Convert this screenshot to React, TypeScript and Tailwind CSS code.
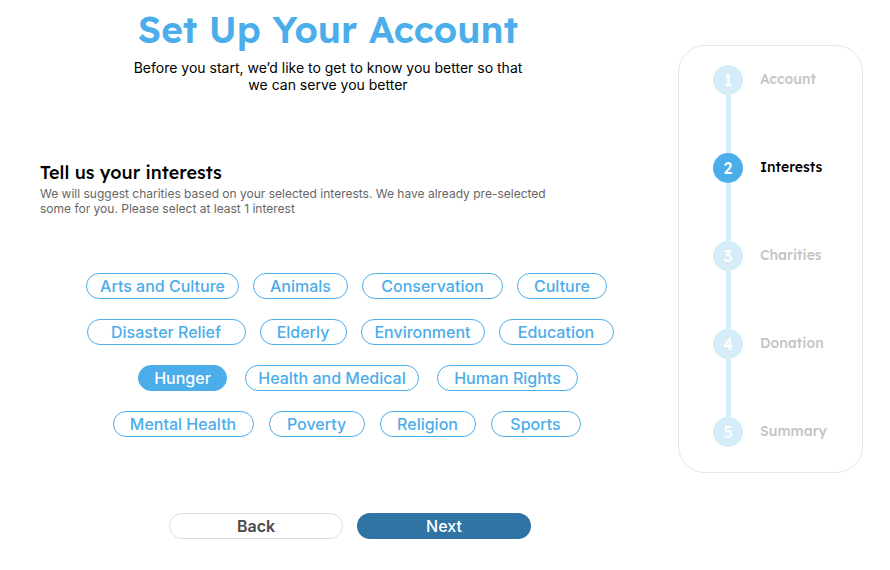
import { useState } from "react";
import { clsx } from "clsx";

const rows = [
  {
    layout: "gap-[14px] pl-[37px]",
    items: [
      { name: "Arts and Culture", width: "w-[153px]" },
      { name: "Animals", width: "w-[95px]" },
      { name: "Conservation", width: "w-[141px]" },
      { name: "Culture", width: "w-[90px]" },
    ],
  },
  {
    layout: "gap-[14px] pl-[44px]",
    items: [
      { name: "Disaster Relief", width: "w-[159px]" },
      { name: "Elderly", width: "w-[87px]" },
      { name: "Environment", width: "w-[124px]" },
      { name: "Education", width: "w-[115px]" },
    ],
  },
  {
    layout: "gap-[18px] pl-[60px]",
    items: [
      { name: "Hunger", width: "w-[89px]" },
      { name: "Health and Medical", width: "w-[174px]" },
      { name: "Human Rights", width: "w-[141px]" },
    ],
  },
  {
    layout: "gap-[15px] pl-[37px]",
    items: [
      { name: "Mental Health", width: "w-[141px]" },
      { name: "Poverty", width: "w-[96px]" },
      { name: "Religion", width: "w-[96px]" },
      { name: "Sports", width: "w-[90px]" },
    ],
  },
];

const steps = ["Account", "Interests", "Charities", "Donation", "Summary"];
const currentStep = 1;

function Interests() {
  const [selected, setSelected] = useState<string[]>(["Hunger"]);
  const toggle = (name: string) =>
    setSelected((old) => (old.includes(name) ? old.filter((n) => n !== name) : [...old, name]));

  return (
    <div className="flex flex-col gap-5">
      {rows.map((row) => (
        <div key={row.items[0].name} className={clsx("flex justify-center", row.layout)}>
          {row.items.map(({ name, width }) => {
            const on = selected.includes(name);
            return (
              <button
                key={name}
                type="button"
                aria-pressed={on}
                onClick={() => toggle(name)}
                className={clsx(
                  "flex h-[26px] shrink-0 items-center justify-center rounded-full border border-[#4badea] text-base leading-6 font-medium whitespace-nowrap",
                  width,
                  on ? "bg-[#4badea] text-white" : "bg-white text-[#4badea]",
                )}
              >
                {name}
              </button>
            );
          })}
        </div>
      ))}
    </div>
  );
}

function Progress() {
  return (
    <aside className="mt-[45px] w-[185px] shrink-0 rounded-[27px] border border-[#e6e6e6] pt-[19px] pb-[25px] pl-[34px]">
      <ol>
        {steps.map((step, i) => {
          const active = i === currentStep;
          const last = i === steps.length - 1;
          return (
            <li key={step} aria-current={active ? "step" : undefined} className="flex gap-[17px]">
              <div className="flex flex-col items-center">
                <span
                  className={clsx(
                    "flex size-[30px] items-center justify-center rounded-full text-base font-medium text-white",
                    active ? "bg-[#4badea]" : "bg-[#d5edf9]",
                  )}
                >
                  {i + 1}
                </span>
                {!last && <span className="h-[58px] w-[5px] bg-[#d5edf9]" />}
              </div>
              <span
                className={clsx(
                  "text-sm leading-7 font-medium",
                  active ? "text-black" : "text-[#c4c4c4]",
                )}
              >
                {step}
              </span>
            </li>
          );
        })}
      </ol>
    </aside>
  );
}

export default function App() {
  return (
    <main className="flex items-start gap-[22px] bg-white pr-[27px] font-['Lexend','Inter',sans-serif]">
      <div className="min-w-0 flex-1 font-['Inter',sans-serif]">
        <header className="pt-[5px] text-center">
          <h1 className="font-['Lexend','Inter',sans-serif] text-[37px] leading-[48px] font-semibold text-[#4badea]">
            Set Up Your Account
          </h1>
          <p className="mx-auto mt-[6px] max-w-[410px] text-sm leading-[17px] text-black">
            Before you start, we’d like to get to know you better so that we can serve you better
          </p>
        </header>

        <section className="mt-[68px]">
          <h2 className="pl-10 font-['Lexend','Inter',sans-serif] text-lg leading-6 font-medium text-black">
            Tell us your interests
          </h2>
          <p className="ml-10 max-w-[540px] pt-px text-[12px] leading-[15px] text-[#666666]">
            We will suggest charities based on your selected interests. We have already pre-selected
            some for you. Please select at least 1 interest
          </p>
          <div className="mt-[57px]">
            <Interests />
          </div>
        </section>

        <div className="mt-[76px] flex justify-center gap-[14px] pl-11">
          <button
            type="button"
            className="h-[26px] w-[174px] rounded-full border border-[#dddddd] bg-white text-base leading-6 font-semibold text-[#4a4a4a]"
          >
            Back
          </button>
          <button
            type="button"
            className="h-[26px] w-[174px] rounded-full bg-[#2f74a3] text-base leading-6 font-medium text-white"
          >
            Next
          </button>
        </div>
      </div>
      <Progress />
    </main>
  );
}
